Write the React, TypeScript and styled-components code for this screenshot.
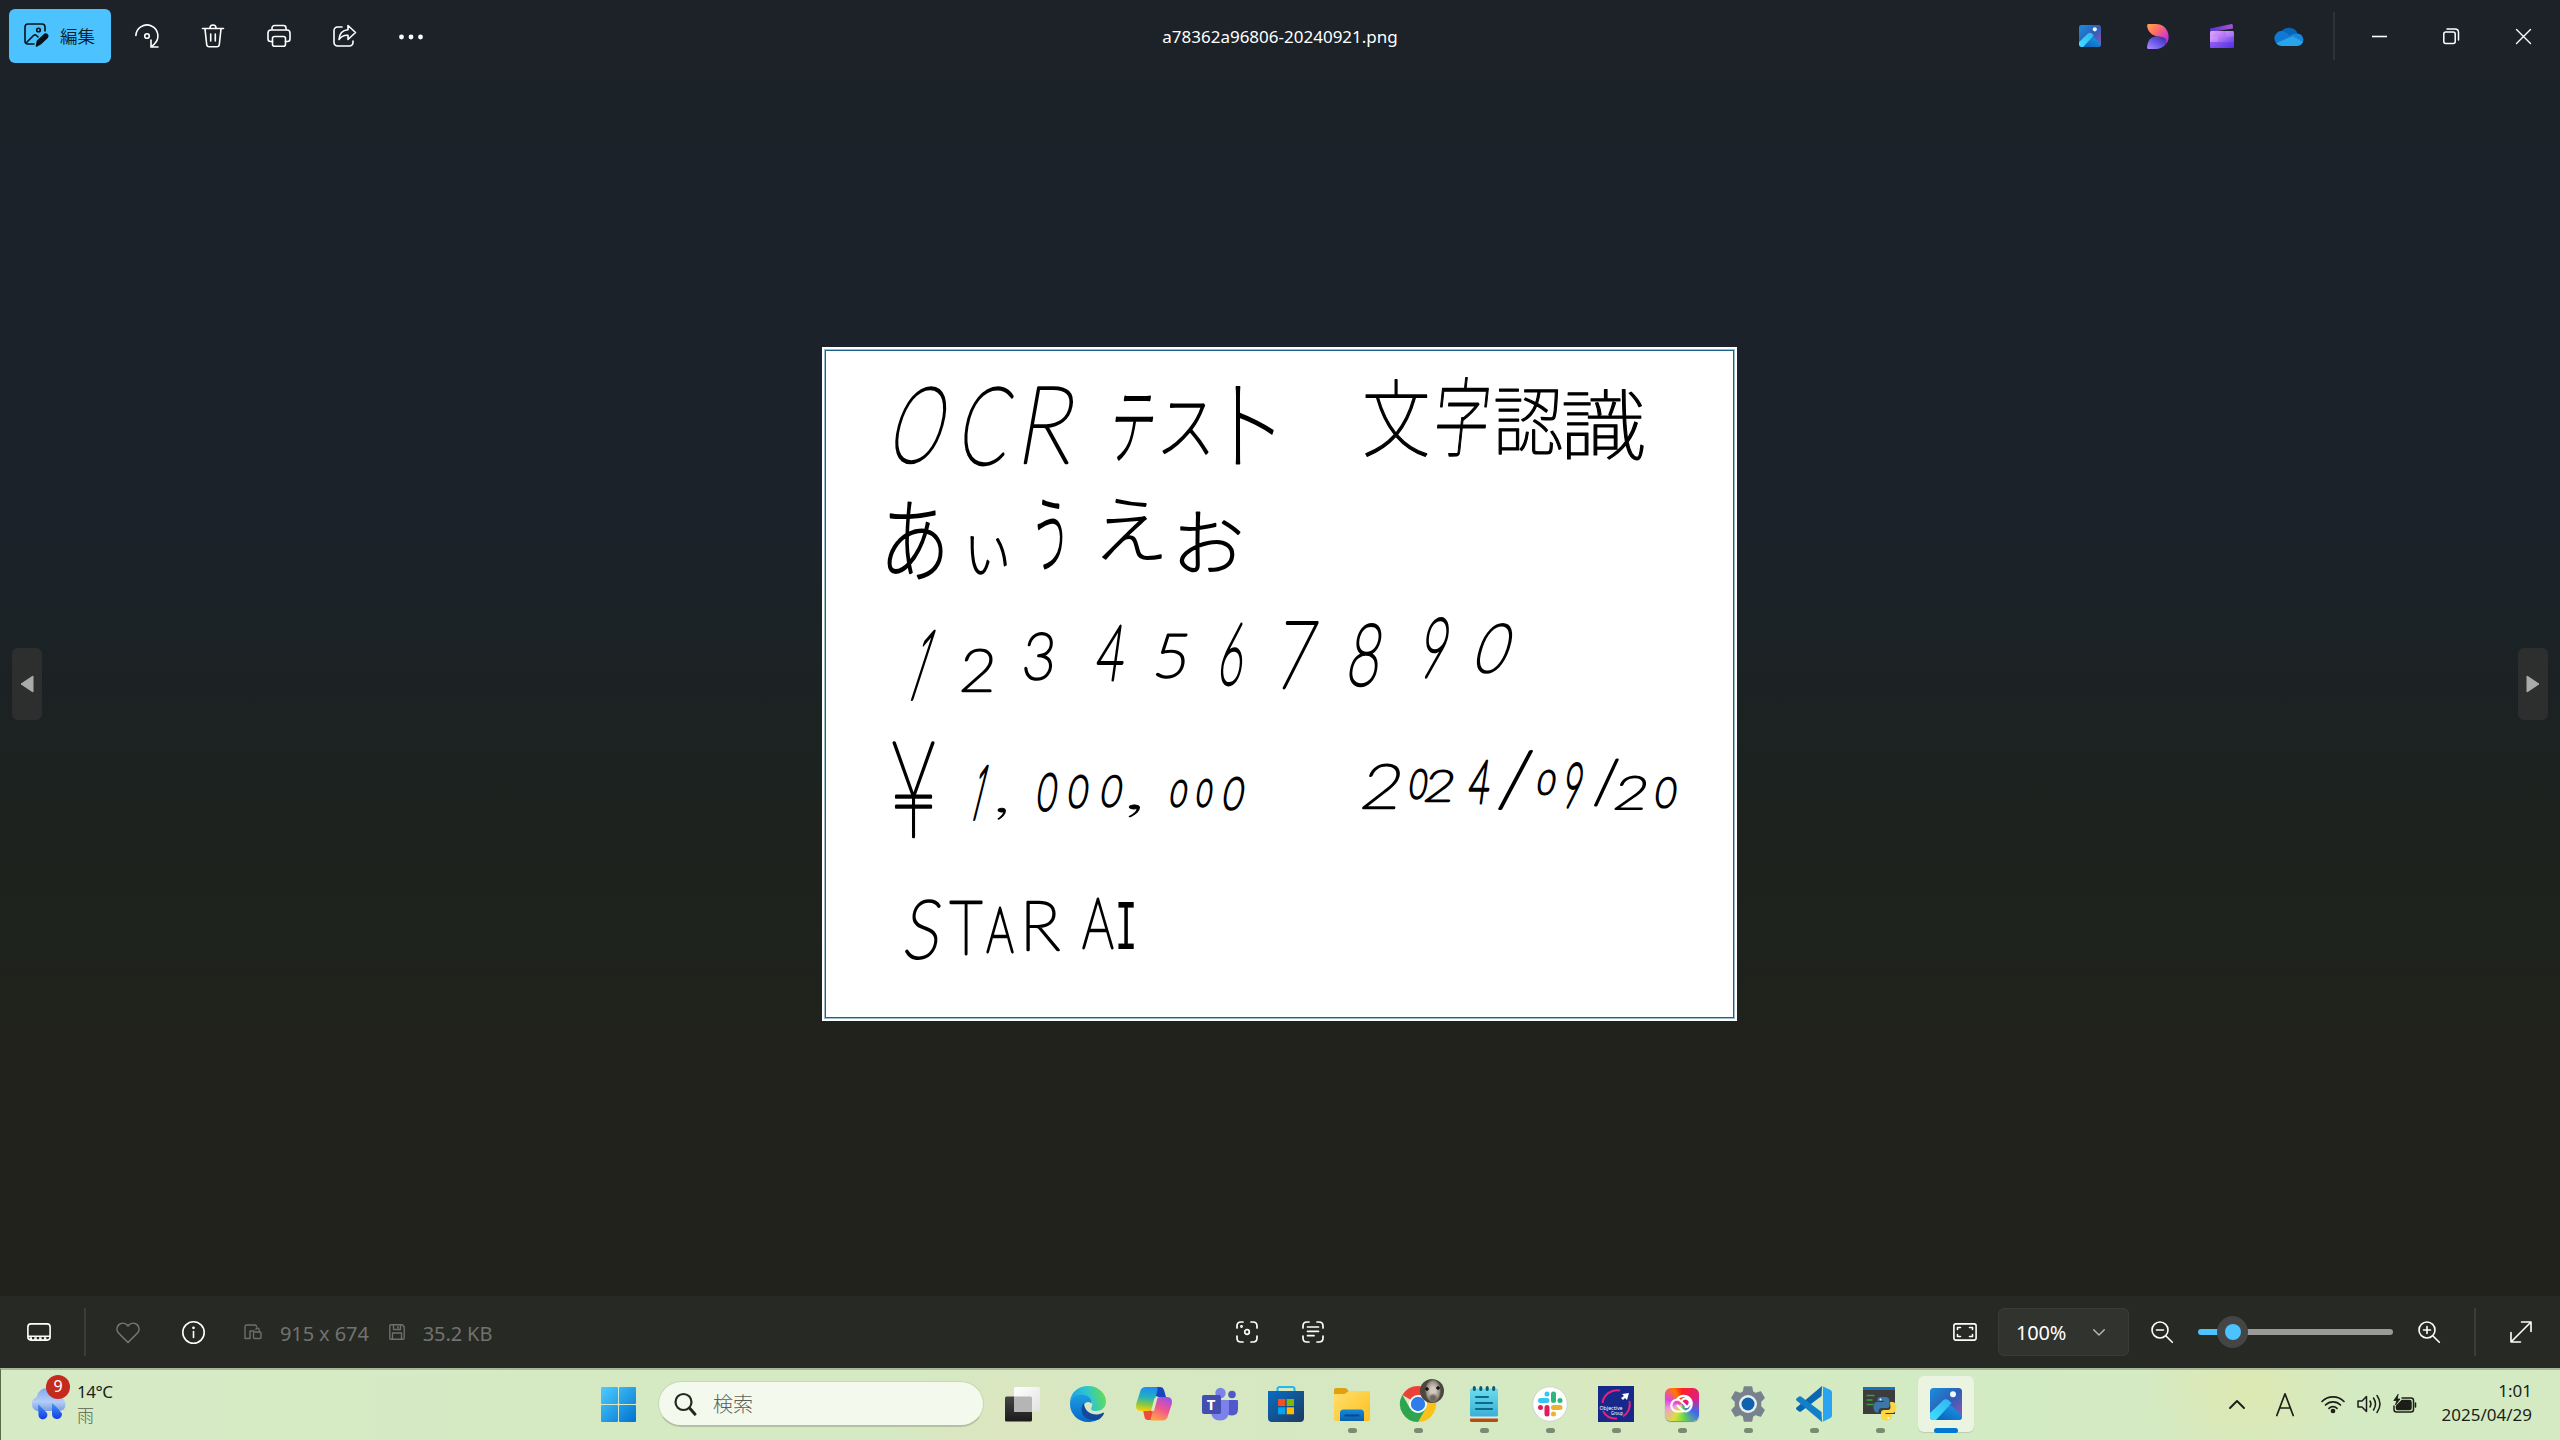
import React from 'react';
import styled, { createGlobalStyle } from 'styled-components';

const GlobalStyle = createGlobalStyle`
  * { box-sizing: border-box; }
  body { margin: 0; background: #1c2228; overflow: hidden; }
  svg { display: block; flex: none; overflow: visible; }
`;

const Screen = styled.div`
  width: 2560px;
  height: 1440px;
  display: flex;
  flex-direction: column;
  font-family: 'Noto Sans', 'Noto Sans CJK JP', sans-serif;
  color: #fff;
  background: linear-gradient(180deg, #1c2228 0%, #1b222a 22%, #1b2229 38%, #1d221f 56%, #20221b 72%, #20221b 100%);
`;

/* ---------- title bar ---------- */
const TitleBar = styled.header`
  height: 72px;
  display: grid;
  grid-template-columns: 1fr auto 1fr;
  align-items: center;
`;
const Tools = styled.div`
  display: flex;
  align-items: center;
  padding-left: 9px;
`;
const EditButton = styled.button`
  width: 102px;
  height: 54px;
  margin-right: 3px;
  border: 0;
  border-radius: 6px;
  background: #4cc2ff;
  color: #06202e;
  display: flex;
  align-items: center;
  gap: 12px;
  padding: 0 0 2px 15px;
  font: 350 17.5px 'Noto Sans CJK JP', sans-serif;
`;
const ToolSlot = styled.div<{ $w?: number }>`
  width: ${(p) => p.$w ?? 66}px;
  height: 48px;
  display: flex;
  align-items: center;
  justify-content: center;
`;
const FileName = styled.div`
  font-size: 17px;
  line-height: 24px;
  padding-top: 1px;
  color: #fff;
`;
const WindowTools = styled.div`
  display: flex;
  align-items: center;
  justify-content: flex-end;
`;
const Divider = styled.div<{ $c?: string }>`
  width: 2px;
  height: 48px;
  flex: none;
  background: ${(p) => p.$c ?? '#2d3238'};
`;

/* ---------- viewer ---------- */
const Viewer = styled.main`
  flex: 1;
  display: flex;
  align-items: center;
  justify-content: space-between;
  padding: 0 12px;
`;
const NavButton = styled.button`
  width: 30px;
  height: 72px;
  border: 0;
  padding: 0;
  border-radius: 6px;
  background: #2c2f2d;
  display: flex;
  align-items: center;
  justify-content: center;
`;
const Photo = styled.div`
  width: 915px;
  height: 674px;
  margin-right: 1px;
  background: #fff;
  border: 2px solid #fff;
  box-shadow: inset 0 0 0 1px #9dbccb, inset 0 0 0 2px #1d6488;
`;

/* ---------- info bar ---------- */
const InfoBar = styled.footer`
  height: 72px;
  flex: none;
  display: grid;
  grid-template-columns: 1fr auto 1fr;
  align-items: center;
  background: #272924;
`;
const Group = styled.div<{ $end?: boolean }>`
  display: flex;
  align-items: center;
  justify-content: ${(p) => (p.$end ? 'flex-end' : 'flex-start')};
`;
const Meta = styled.span<{ $l: number; $r: number }>`
  font-size: 20px;
  line-height: 28px;
  padding-top: 3px;
  color: #72736f;
  white-space: nowrap;
  letter-spacing: -0.1px;
  margin: 0 ${(p) => p.$r}px 0 ${(p) => p.$l}px;
`;
const ZoomBox = styled.div`
  width: 131px;
  height: 48px;
  border: 1px solid #3a3c38;
  border-radius: 6px;
  background: #31332f;
  display: flex;
  align-items: center;
  justify-content: space-between;
  padding: 0 23px 0 17px;
  font-size: 20px;
  letter-spacing: -0.2px;
`;
const Track = styled.div`
  width: 195px;
  height: 6px;
  border-radius: 3px;
  background: linear-gradient(90deg, #4cc2ff 34px, #9a9a98 34px);
  display: flex;
  align-items: center;
  padding-left: 19px;
`;
const Thumb = styled.div`
  width: 31px;
  height: 32px;
  flex: none;
  border-radius: 50%;
  background: #454545;
  display: flex;
  align-items: center;
  justify-content: center;
  &::after {
    content: '';
    width: 16px;
    height: 16px;
    border-radius: 50%;
    background: #4cc2ff;
  }
`;
const Gap = styled.div<{ $w: number }>`
  width: ${(p) => p.$w}px;
  flex: none;
`;

/* ---------- taskbar ---------- */
const Taskbar = styled.nav`
  height: 72px;
  flex: none;
  border-top: 2px solid #a9b79a;
  border-left: 1px solid #5b6b4a;
  display: flex;
  align-items: center;
  padding-bottom: 2px;
  color: #1b1f18;
  background:
    radial-gradient(ellipse 110px 90px at 2245px 20px, #dee8b2 0%, transparent 100%),
    radial-gradient(ellipse 120px 70px at 1010px 50px, #dde5bf 0%, transparent 100%),
    radial-gradient(ellipse 130px 90px at 1640px 10px, #dbe8bd 0%, transparent 100%),
    linear-gradient(90deg, #d7eac6 0%, #d5eac3 25%, #d6e8c2 50%, #d3ebc4 75%, #d5eac3 100%);
`;
const Weather = styled.div`
  width: 600px;
  display: flex;
  align-items: center;
  padding-left: 28px;
`;
const WeatherIcon = styled.div`
  position: relative;
  width: 37px;
  height: 34px;
`;
const Badge = styled.span`
  position: absolute;
  left: 17px;
  top: -12px;
  width: 24px;
  height: 24px;
  border-radius: 50%;
  background: #c42b1c;
  color: #fff;
  font-size: 16px;
  line-height: 23px;
  text-align: center;
`;
const TwoLines = styled.div<{ $right?: boolean }>`
  font-size: 17px;
  line-height: 24px;
  padding-bottom: 2px;
  text-align: ${(p) => (p.$right ? 'right' : 'left')};
  margin-left: ${(p) => (p.$right ? 25 : 11)}px;
  white-space: nowrap;
  letter-spacing: ${(p) => (p.$right ? 0 : -0.5)}px;
`;
const Sub = styled.div`
  margin-top: -1px;
  color: #565f4e;
  font-family: 'Noto Sans CJK JP', sans-serif;
  font-weight: 300;
`;
const Search = styled.div`
  width: 326px;
  height: 46px;
  margin: 0 5px 0 22px;
  border-radius: 23px;
  border: 1px solid #c7d7b4;
  border-bottom: 2px solid #b2c2a0;
  background: #f3f9ec;
  display: flex;
  align-items: center;
  gap: 17px;
  padding-left: 15px;
  font: 300 20px 'Noto Sans CJK JP', sans-serif;
  color: #5d6058;
`;
const Task = styled.div<{ $active?: boolean }>`
  position: relative;
  width: 56px;
  height: 56px;
  margin: 0 5px;
  border-radius: 6px;
  background: ${(p) => (p.$active ? '#ebf4e0' : 'transparent')};
  box-shadow: ${(p) => (p.$active ? '0 1px 1px #bccbad' : 'none')};
  display: flex;
  align-items: center;
  justify-content: center;
`;
const Running = styled.i<{ $active?: boolean }>`
  position: absolute;
  bottom: -1px;
  left: ${(p) => (p.$active ? 16 : 23.5)}px;
  width: ${(p) => (p.$active ? 24 : 9)}px;
  height: 5px;
  border-radius: 3px;
  background: ${(p) => (p.$active ? '#0078d4' : '#7b8a70')};
`;
const Avatar = styled.i`
  position: absolute;
  left: 30px;
  top: 3px;
  width: 24px;
  height: 24px;
  border-radius: 50%;
  background:
    radial-gradient(circle 2px at 7px 10px, #15120f 70%, transparent),
    radial-gradient(circle 2px at 18px 9px, #15120f 70%, transparent),
    radial-gradient(ellipse 5px 5px at 13px 19px, #6c665e 40%, transparent),
    radial-gradient(ellipse 8px 12px at 13px 12px, #d2cabe 30%, #978f82 80%, transparent),
    #4b463f;
`;
const Tray = styled.div`
  flex: 1;
  display: flex;
  align-items: center;
  justify-content: flex-end;
  padding-right: 28px;
`;

/* ---------- handwriting: every character fills its own box on the canvas ---------- */
type Mark = [string, number, number, number, number, number?, string?];
const ONE = 'Inter';
const MARKS: Mark[][] = [
  [
    ['O', 71, 39, 126, 117, 15], ['C', 140, 39, 191, 119, 10], ['R', 205, 39, 256, 117, 10],
    ['テ', 290, 48, 332, 114, 8], ['ス', 341, 55, 389, 108, 4], ['ト', 413, 39, 452, 118],
  ],
  [
    ['文', 543, 31, 606, 110], ['字', 614, 30, 667, 110, 6], ['認', 673, 42, 740, 108], ['識', 741, 43, 822, 115],
  ],
  [
    ['あ', 65, 155, 121, 233], ['い', 148, 189, 185, 228], ['う', 215, 152, 241, 222],
    ['え', 280, 152, 340, 212], ['お', 357, 164, 419, 225],
  ],
  [
    ['1', 85, 283, 112, 353, 18, ONE], ['2', 140, 301, 172, 345, 4], ['3', 202, 285, 232, 334, 5],
    ['4', 274, 277, 305, 334, 8], ['5', 335, 286, 365, 332, 8], ['6', 399, 275, 424, 339, 8],
    ['7', 457, 274, 494, 343, 8], ['8', 528, 276, 560, 340, 10], ['9', 600, 270, 627, 331, 10],
    ['0', 654, 276, 691, 327, 18],
  ],
  [
    ['¥', 70, 393, 113, 491], ['1', 148, 418, 166, 473, 14, ONE], [',', 175, 461, 184, 474],
    ['0', 215, 426, 236, 465, 8], ['0', 246, 428, 267, 462, 8], ['0', 279, 428, 301, 461, 10],
    [',', 306, 457, 318, 471], ['0', 348, 433, 366, 461, 10], ['0', 374, 432, 391, 461, 8],
    ['0', 401, 430, 423, 464, 10],
  ],
  [
    ['2', 542, 416, 579, 462, 10], ['0', 587, 422, 606, 453, 8], ['2', 604, 422, 632, 455, 10],
    ['4', 646, 412, 670, 457, 8], ['/', 676, 402, 711, 463], ['0', 715, 423, 734, 449, 10],
    ['9', 742, 415, 761, 461, 8], ['/', 772, 412, 797, 460], ['2', 794, 428, 825, 463, 10],
    ['0', 833, 430, 855, 462, 8],
  ],
  [
    ['S', 84, 552, 119, 613, 8], ['T', 127, 554, 161, 608], ['A', 164, 560, 192, 606],
    ['R', 204, 554, 238, 604], ['A', 260, 550, 292, 602], ['I', 296, 556, 312, 602, 0, '"Liberation Mono"'],
  ],
];
const PEN_FONT = 'Lato, "Noto Sans CJK JP"';

/* Ink added round the hairline glyphs, by script, so that all strokes look drawn by one pen. */
const penFor = (ch: string, font: string) => {
  if (font.includes('Mono')) return 0.1;
  if (ch === ',') return 1.2;
  if (ch > '\u4e00') return 1.2;
  if (ch > '\u3000') return 1.9;
  return 2.5;
};

function fit(mark: Mark, ctx: CanvasRenderingContext2D) {
  const [ch, x0, y0, x1, y1, slant = 0, font = PEN_FONT] = mark;
  ctx.font = `100 100px ${font}`;
  const m = ctx.measureText(ch);
  const inkW = m.actualBoundingBoxRight + m.actualBoundingBoxLeft;
  const inkH = m.actualBoundingBoxAscent + m.actualBoundingBoxDescent;
  const pen = penFor(ch, font);
  const h = y1 - y0 - pen;
  const lean = h * Math.tan((slant * Math.PI) / 180) * (font === ONE ? 0.8 : 0.4);
  const w = Math.max(x1 - x0 - pen - lean, 4);
  const cx = (m.actualBoundingBoxRight - m.actualBoundingBoxLeft) / 2;
  const cy = (m.actualBoundingBoxDescent - m.actualBoundingBoxAscent) / 2;
  const sx = w / inkW;
  const sy = h / inkH;
  return {
    transform: `translate(${(x0 + x1) / 2} ${(y0 + y1) / 2}) skewX(${-slant}) scale(${sx} ${sy}) translate(${-cx} ${-cy})`,
    pen: pen / Math.sqrt(sx * sy),
  };
}

const Ink = styled.text<{ $font: string }>`
  font-family: ${(p) => p.$font}, sans-serif;
  font-size: 100px;
  font-weight: 100;
  fill: #000;
  stroke: #000;
  stroke-linejoin: round;
`;

function Handwriting() {
  const ctx = React.useMemo(() => document.createElement('canvas').getContext('2d')!, []);
  return (
    <svg width="915" height="674" viewBox="2 2 915 674">
      {MARKS.map((line, i) => (
        <g key={i}>
          {line.map((m, j) => {
            const f = fit(m, ctx);
            return (
              <Ink key={j} $font={m[6] ?? PEN_FONT} strokeWidth={f.pen} transform={f.transform}>{m[0]}</Ink>
            );
          })}
        </g>
      ))}
    </svg>
  );
}

/* ---------- line icons ---------- */
const Line = styled.svg.attrs({ fill: 'none', strokeLinecap: 'round', strokeLinejoin: 'round' })<{ $c?: string; $s?: number }>`
  stroke: ${(p) => p.$c ?? '#fff'};
  stroke-width: ${(p) => p.$s ?? 1.6};
`;
const box = (w: number, h = w) => ({ width: w, height: h, viewBox: `0 0 ${w} ${h}` });

const EditIcon = () => (
  <Line {...box(24)} $c="#06131a" $s={1.6}>
    <path d="M21 8V4a3 3 0 0 0-3-3H4a3 3 0 0 0-3 3v14a3 3 0 0 0 3 3h6M3 19l6.5-6.5q1.5-1.2 3 0l1.5 1.5" />
    <circle cx="14.5" cy="7" r="1.8" />
    <path d="M12.5 23l1-5 7-6.5q1.500-1 2.700.2t.1 2.700l-7 6.500z" fill="#06131a" />
  </Line>
);
const RotateIcon = () => (
  <Line {...box(24)}>
    <path d="M.9 11.500a11 11 0 1 1 18.500 8.500l-3 2.800M16 16v7h7" strokeLinejoin="miter" />
    <circle cx="12" cy="12" r="2.300" />
  </Line>
);
const TrashIcon = () => (
  <Line {...box(24)}>
    <path d="M1.500 4.500h21M9 4a3 3 0 0 1 6 0M4 5l1.700 15.500a2.500 2.500 0 0 0 2.500 2.300h7.600a2.500 2.500 0 0 0 2.500-2.300L20 5M9.700 10v7M14.300 10v7" />
  </Line>
);
const PrintIcon = () => (
  <Line {...box(24)}>
    <path d="M5 6V4a2.500 2.500 0 0 1 2.500-2.500h9A2.500 2.500 0 0 1 19 4v2M5.500 17.500H3.500a2.500 2.500 0 0 1-2.500-2.500V9a3 3 0 0 1 3-3h16a3 3 0 0 1 3 3v6a2.500 2.500 0 0 1-2.500 2.500h-2" />
    <rect x="5.500" y="12.500" width="13" height="9.700" rx="2" />
  </Line>
);
const ShareIcon = () => (
  <Line {...box(24)}>
    <path d="M9 3H4.500A3.500 3.500 0 0 0 1 6.500v12A3.500 3.500 0 0 0 4.500 22h12a3.500 3.500 0 0 0 3.500-3.500V17" />
    <path d="M15 1.500l7.500 7-7.500 7v-4.200c-4.500-.3-7 1.200-9 4.200.3-5.500 3-9.300 9-9.800z" />
  </Line>
);
const MoreIcon = () => (
  <svg {...box(24)} fill="#fff"><circle cx="2.500" cy="13" r="2.400" /><circle cx="12" cy="13" r="2.400" /><circle cx="21.500" cy="13" r="2.400" /></svg>
);

/* ---------- colour icons ---------- */
const PhotosIcon = ({ w, h, id }: { w: number; h: number; id: string }) => (
  <svg width={w} height={h} viewBox="0 0 32 32" preserveAspectRatio="none">
    <defs>
      <linearGradient id={id + 'a'} x1="0" y1="0" x2="1" y2="1"><stop stopColor="#1a8fe0" /><stop offset=".5" stopColor="#2d5fb4" /><stop offset="1" stopColor="#9c52b8" /></linearGradient>
      <linearGradient id={id + 'b'} x1="1" y1="0" x2="0" y2="1"><stop stopColor="#2fb4f0" /><stop offset="1" stopColor="#3fe0ff" /></linearGradient>
      <linearGradient id={id + 'c'} x1="0" y1="1" x2="1" y2="0"><stop stopColor="#0a5fb8" /><stop offset="1" stopColor="#1a9be8" /></linearGradient>
      <clipPath id={id + 'd'}><rect width="32" height="32" rx="3.500" /></clipPath>
    </defs>
    <g clipPath={`url(#${id}d)`}>
      <rect width="32" height="32" fill={`url(#${id}a)`} />
      <path d="M5 32l12-13q3-3 6 0l9 9v4z" fill={`url(#${id}c)`} />
      <path d="M0 25l13-12.500q3-2.700 6 0l2.500 2.700L6 32H2l-2-2z" fill={`url(#${id}b)`} />
    </g>
    <circle cx="23" cy="6.300" r="3" fill="#f2f6ff" />
  </svg>
);
const DesignerIcon = () => (
  <svg {...box(22, 25)}>
    <defs>
      <linearGradient id="dsA" x1="0" y1="0" x2="1" y2=".9"><stop stopColor="#ffa64a" /><stop offset=".4" stopColor="#ff6b6b" /><stop offset=".75" stopColor="#d43cc4" /><stop offset="1" stopColor="#8f32e8" /></linearGradient>
      <linearGradient id="dsB" x1="0" y1="1" x2="1" y2="0"><stop stopColor="#b68cff" /><stop offset=".5" stopColor="#6558e8" /><stop offset="1" stopColor="#3a2a9c" /></linearGradient>
    </defs>
    <path d="M0 1.500Q0 0 1.500 0H9a12.500 12.500 0 0 1 9 21.300q2.500-6-3-8.300C8 13 1 10 0 1.500z" fill="url(#dsA)" />
    <path d="M0 24C.5 16 4 12.500 10 12.500q7 .2 9 2.500a7 7 0 0 1-1 6.300Q14 25 9 25H1z" fill="url(#dsB)" />
  </svg>
);
const ClipchampIcon = () => (
  <svg {...box(24)}>
    <defs>
      <linearGradient id="cc1" x1="0" y1="0" x2="1" y2="1"><stop stopColor="#e6a8ff" /><stop offset=".5" stopColor="#a86cf4" /><stop offset="1" stopColor="#4a2ee8" /></linearGradient>
      <linearGradient id="cc2"><stop stopColor="#5536c8" /><stop offset="1" stopColor="#a653dc" /></linearGradient>
    </defs>
    <path d="M0 4.500L21.500 0q1-.1 1.200.9L23 4.500 1 8H0z" fill="url(#cc2)" />
    <rect y="7" width="24" height="17" rx="1.500" fill="url(#cc1)" />
    <path d="M0 12.500h16V7h8v5.500H8V18H0zM8 18h16" fill="#fff" opacity=".12" />
    <path d="M0 18h24v4.500a1.500 1.500 0 0 1-1.500 1.500h-21A1.500 1.500 0 0 1 0 22.500z" fill="#5b36ee" opacity=".45" />
  </svg>
);
const OneDriveIcon = () => (
  <svg {...box(30, 20)}>
    <path d="M7 6A9.500 9.500 0 0 1 23.500 7L17 12z" fill="#0a64b8" />
    <path d="M23 7.500a6.300 6.300 0 0 1 5.500 9.500L15 10.500Q19 7 23 7.500z" fill="#1785da" />
    <path d="M2 17A7.500 7.500 0 0 1 6.500 5Q10 4.500 12.500 7l7 4.500z" fill="#1178d4" />
    <path d="M2 17l16.500-7 10.500 6q-2 4-6 4H8q-4 0-6-3z" fill="#28a4ea" />
  </svg>
);

const WindowsIcon = () => (
  <svg {...box(35)}>
    <defs><linearGradient id="win" gradientUnits="userSpaceOnUse" x1="0" y1="0" x2="35" y2="35"><stop stopColor="#4ecdff" /><stop offset="1" stopColor="#0072d0" /></linearGradient></defs>
    <g fill="url(#win)"><rect width="17" height="17" rx="1" /><rect x="18" width="17" height="17" rx="1" /><rect y="18" width="17" height="17" rx="1" /><rect x="18" y="18" width="17" height="17" rx="1" /></g>
  </svg>
);
const TaskViewIcon = () => (
  <svg {...box(35)}>
    <defs>
      <linearGradient id="tv1" x2="0" y2="1"><stop stopColor="#444" /><stop offset="1" stopColor="#1b1b1b" /></linearGradient>
      <linearGradient id="tv2" x2="1" y2="1"><stop stopColor="#fff" /><stop offset="1" stopColor="#e2e2e2" /></linearGradient>
    </defs>
    <rect y="9.500" width="27" height="25" rx="1.500" fill="url(#tv1)" />
    <rect x="9" y="0" width="26" height="25" rx="1.500" fill="url(#tv2)" />
    <path d="M9 9.500h16.500a1.500 1.500 0 0 1 1.500 1.500v14H10.500A1.500 1.500 0 0 1 9 23.500z" fill="#b5b5b5" />
  </svg>
);
const EdgeIcon = () => (
  <svg {...box(36)}>
    <defs>
      <linearGradient id="eg1" x1="0" y1=".6" x2="1" y2=".4"><stop stopColor="#1b9fe0" /><stop offset=".5" stopColor="#2cc4d2" /><stop offset="1" stopColor="#62de52" /></linearGradient>
      <linearGradient id="eg2" x2="0" y2="1"><stop stopColor="#1b9de2" /><stop offset="1" stopColor="#0a66c8" /></linearGradient>
    </defs>
    <path d="M0 18C0 5 10 0 18 0c11 0 18 8 18 15.500C36 22 31 25 26 25c-4 0-5.500-1.500-4.500-3.500 2-4 0-8-6-10C8 9 2 13 0 18z" fill="url(#eg1)" />
    <path d="M0 18C.5 11 8 8 14 9c6 1 8 5 7.500 9-1-3-7-3-8 2C12 28 18 34 27 34c-3 1.500-6 2-9 2C8 36 0 28 0 18z" fill="url(#eg2)" />
    <path d="M14 17c-5 5-3 19 13.500 17 3-1 5.500-4 6.500-6.500.3-1-.5-1-1-.7-8 4.500-19 0-19-9.800z" fill="#114a9b" />
  </svg>
);
const CopilotIcon = () => (
  <svg {...box(36, 34)}>
    <defs>
      <linearGradient id="cp1" x1=".4" y1="0" x2=".3" y2="1"><stop stopColor="#1f8cf0" /><stop offset=".4" stopColor="#22b0c0" /><stop offset=".7" stopColor="#7fc84a" /><stop offset="1" stopColor="#ffd000" /></linearGradient>
      <linearGradient id="cp2" x1=".7" y1="0" x2=".3" y2="1"><stop stopColor="#a04ee8" /><stop offset=".5" stopColor="#f0568c" /><stop offset="1" stopColor="#ffa04a" /></linearGradient>
    </defs>
    <path d="M17 0h7q3 0 4 3l2 7h-7q-3 0-4-3z" fill="#1746c0" />
    <path d="M19 33h-7q-3 0-3.500-3L7 23h7q2.500 0 3.500 3z" fill="#f04a3a" />
    <path d="M10 0h10q2 0 1.500 3l-4.500 17q-1 4-5 4H5q-6 0-4.800-7L4 5q1-5 6-5z" fill="url(#cp1)" />
    <path d="M26 33.500H16q-2 0-1-3L19.500 14q1-4 5-4H31q6 0 4.800 7L32 28.500q-1 5-6 5z" fill="url(#cp2)" />
    <path d="M18.500 11h3l-3.500 13h-3z" fill="#d7e8c3" />
  </svg>
);
const LogoLetter = styled.text`
  font: 700 15px 'Noto Sans', sans-serif;
  fill: #fff;
`;
const TeamsIcon = () => (
  <svg {...box(36, 33)}>
    <circle cx="18.500" cy="5" r="5.200" fill="#7b83eb" /><circle cx="30" cy="6.500" r="3.800" fill="#5059c9" />
    <path d="M23 12h12a1 1 0 0 1 1 1v8q0 6.500-6 6.500-5 0-7-4z" fill="#5059c9" />
    <path d="M10 12h16a1 1 0 0 1 1 1v10q0 9.500-9 9.500t-9-9.500V13z" fill="#7b83eb" />
    <rect y="7" width="19" height="19" rx="2" fill="#444db0" />
    <LogoLetter x="4.800" y="21.800">T</LogoLetter>
  </svg>
);
const StoreIcon = () => (
  <svg {...box(36)}>
    <defs><linearGradient id="st" x1="0" y1="0" x2="1" y2="1"><stop stopColor="#0a6cc4" /><stop offset="1" stopColor="#1c3a60" /></linearGradient></defs>
    <path d="M9.500 7V3a2 2 0 0 1 2-2h13a2 2 0 0 1 2 2v4" fill="none" stroke="#22b8f0" strokeWidth="2.200" />
    <path d="M0 5h36v27q0 4-4 4H4q-4 0-4-4z" fill="url(#st)" />
    <path fill="#f25022" d="M10 13h7.300v7H10z" /><path fill="#7fba00" d="M18.700 13H26v7h-7.300z" /><path fill="#00a4ef" d="M10 21.300h7.300v7H10z" /><path fill="#ffb900" d="M18.700 21.300H26v7h-7.300z" />
  </svg>
);
const ExplorerIcon = () => (
  <svg {...box(36, 33)}>
    <defs>
      <linearGradient id="ex" x1="0" y1="0" x2="1" y2="1"><stop stopColor="#ffdf6e" /><stop offset="1" stopColor="#fcbf1e" /></linearGradient>
      <linearGradient id="ex2" x2="0" y2="1"><stop stopColor="#1489dc" /><stop offset="1" stopColor="#0a5fae" /></linearGradient>
    </defs>
    <path d="M0 2q0-2 2-2h9q1.500 0 2.500 1.500L15 4l-5 6H0z" fill="#e0a010" />
    <path d="M0 6h9q2 0 3.500-1.300T16 3h18q2 0 2 2v26q0 2-2 2H2q-2 0-2-2z" fill="url(#ex)" />
    <path d="M6 33v-8q0-3.500 3.500-3.500h17q3.500 0 3.500 3.500v8z" fill="url(#ex2)" />
    <path d="M11.500 27.500h13" stroke="#0a4a8c" strokeWidth="2" strokeLinecap="round" />
  </svg>
);
const ChromeIcon = () => (
  <svg {...box(36)}>
    <path d="M18 18L2.400 9A18 18 0 0 1 33.600 9z" fill="#ea4335" />
    <path d="M18 9h15.600A18 18 0 0 1 18 36l7.800-13.500z" fill="#fbc116" />
    <path d="M25.800 22.500L18 36A18 18 0 0 1 2.400 9l7.800 13.500z" fill="#2da44e" />
    <circle cx="18" cy="18" r="9" fill="#fff" /><circle cx="18" cy="18" r="7.200" fill="#2f7de9" />
  </svg>
);
const NotepadIcon = () => (
  <svg {...box(28, 36)}>
    <defs><linearGradient id="np" x2="0" y2="1"><stop stopColor="#6cdcee" /><stop offset="1" stopColor="#38b0d8" /></linearGradient></defs>
    <rect y="31" width="28" height="5" rx="1.500" fill="#b4500f" /><rect y="29" width="28" height="3.500" fill="#e6e6e6" />
    <rect y="2.500" width="28" height="28" rx="1.500" fill="url(#np)" />
    <path d="M4.300 1.500v2M10.800 1.500v2M17.200 1.500v2M23.700 1.500v2" stroke="#0e5870" strokeWidth="3" strokeLinecap="round" />
    <path d="M6 11h12M6 17h16M6 23h16" stroke="#0c6a86" strokeWidth="2.200" strokeLinecap="round" />
  </svg>
);
const SlackIcon = () => (
  <svg {...box(36)}>
    <circle cx="18" cy="18" r="17.300" fill="#fff" stroke="#cfd6c8" />
    <g strokeWidth="5" strokeLinecap="round">
      <path d="M15 14.500H8.500M15 8v.01" stroke="#36c5f0" /><path d="M21.500 8v6.500M28 14.500v.01" stroke="#2eb67d" />
      <path d="M21.500 21.500H28M21.500 28v.01" stroke="#ecb22e" /><path d="M15 21.500V28M8.500 21.500v.01" stroke="#e01e5a" />
    </g>
  </svg>
);
const TinyLabel = styled.text<{ $s: number }>`
  font: 400 ${(p) => p.$s}px 'Noto Sans', sans-serif;
  fill: #fff;
`;
const ObjectiveIcon = () => (
  <svg {...box(36)}>
    <rect width="36" height="36" fill="#16298a" />
    <path d="M22 4.500A14.500 14.500 0 0 0 4.500 17M5 25a14.500 14.500 0 0 0 14 7.500M25 30.500A14.500 14.500 0 0 0 31.500 15" fill="none" stroke="#e8207c" strokeWidth="2" />
    <path d="M31 7l-2 7-2-2-2 2-2-2 3-2-2-2z" fill="#fff" />
    <TinyLabel $s={6} x="1.500" y="23.500" textLength="23" lengthAdjust="spacingAndGlyphs">Objective</TinyLabel>
    <TinyLabel $s={5} x="13" y="28.500" textLength="12" lengthAdjust="spacingAndGlyphs">Group</TinyLabel>
  </svg>
);
const Rainbow = styled.div`
  width: 34px;
  height: 33px;
  border-radius: 6px;
  background: conic-gradient(from 0deg, #ff2020, #e01e80 18%, #3a6cf0 34%, #6cd84a 48%, #d8e03a 58%, #f0a0d0 70%, #e040e8 80%, #ff7a00 92%, #ff2020);
  box-shadow: 0 1px 1px #8a8a80;
  display: flex;
  align-items: center;
  justify-content: center;
`;
const CreativeCloudIcon = () => (
  <Rainbow>
    <svg {...box(26, 22)} fill="none" stroke="#fff" strokeWidth="2.200" strokeLinecap="round">
      <path d="M13.500 18.500H8.500a6 6 0 0 1-.5-12q2.300 0 3.800 1.500l4.700 4.500M8 6.500A8 8 0 1 1 17 18.500q-2.300 0-3.800-1.500L8.500 12.500M12.800 7.500a4.300 4.300 0 1 1 3.700 6.500" />
    </svg>
  </Rainbow>
);
const SettingsIcon = () => (
  <svg {...box(36)}>
    <path d="M14.500 1h7l1 5 3 1.700 5-1.700 3.500 6-3.500 3.500v5L34 24l-3.500 6-5-1.700-3 1.700-1 5h-7l-1-5-3-1.700-5 1.700L2 24l3.500-3.500v-5L2 12l3.500-6 5 1.700 3-1.700z" fill="#78828c" stroke="#78828c" strokeWidth="1.500" strokeLinejoin="round" />
    <circle cx="18" cy="18" r="9" fill="#e8edf0" /><circle cx="18" cy="18" r="6.500" fill="#0f62b0" />
  </svg>
);
const VSCodeIcon = () => (
  <svg {...box(36)}>
    <path d="M26 0l-.5 10L5 25.500q-1 .6-2 0L.5 23.500q-1-1 0-2z" fill="#0a66b0" />
    <path d="M26 36l-.5-10L5 10.500q-1-.6-2 0L.5 12.500q-1 1 0 2z" fill="#1180c8" />
    <path d="M26 0l8.500 4Q36 4.700 36 6.500v23q0 1.800-1.500 2.500L26 36q1-.5 1-2V2q0-1.500-1-2z" fill="#28a4f0" />
  </svg>
);
const PythonIcon = () => (
  <svg {...box(34, 34)}>
    <rect width="32" height="27" fill="#3c3c3c" /><rect width="32" height="3" fill="#1870b8" />
    <path d="M3.500 8.500h8M3.500 13h6M3.500 17.500h7" stroke="#3f9c3a" strokeWidth="1.500" />
    <path d="M17 10h6q3.500.5 3.500 4v4.500q0 2.500-2.500 2.500h-5q-3.500 0-3.500 3v1.500h-2q-3-1-3-5.500t3-5H21v-1h-6.500V12q0-1.500 2.500-2z" fill="#3b77a8" />
    <path d="M27 15h3q3.500 1 3.500 5.500T30 26h-7.500v1H29v3.500q-1 3-5.500 3T18 30.500V26q0-3 3-3h4q2.500 0 2.500-3z" fill="#fdd843" />
    <circle cx="17.500" cy="12.500" r="1" fill="#fff" /><circle cx="25.500" cy="31" r="1" fill="#fff" />
  </svg>
);
const RainIcon = () => (
  <svg {...box(37, 34)}>
    <defs>
      <linearGradient id="rn" x2="0" y2="1"><stop stopColor="#7ea8ee" /><stop offset=".6" stopColor="#b4cdf8" /><stop offset="1" stopColor="#7a9ee0" /></linearGradient>
      <linearGradient id="dr" x2="0" y2="1"><stop stopColor="#3c9cf0" /><stop offset="1" stopColor="#1838e8" /></linearGradient>
    </defs>
    <path d="M8 24A7.500 7.500 0 0 1 7.500 10Q10 1 18.500 1t11.500 9q6.500 1.500 6.500 7.500T30 24z" fill="url(#rn)" />
    <path d="M9 17q5 5 9 9a4.500 4.500 0 1 1-8.500 1zM23 16q6 5 10 10.500a5 5 0 1 1-10 1z" fill="url(#dr)" />
  </svg>
);

const TASKS: { icon: React.ReactNode; run?: boolean; active?: boolean; avatar?: boolean }[] = [
  { icon: <TaskViewIcon /> },
  { icon: <EdgeIcon /> },
  { icon: <CopilotIcon /> },
  { icon: <TeamsIcon /> },
  { icon: <StoreIcon /> },
  { icon: <ExplorerIcon />, run: true },
  { icon: <ChromeIcon />, run: true, avatar: true },
  { icon: <NotepadIcon />, run: true },
  { icon: <SlackIcon />, run: true },
  { icon: <ObjectiveIcon />, run: true },
  { icon: <CreativeCloudIcon />, run: true },
  { icon: <SettingsIcon />, run: true },
  { icon: <VSCodeIcon />, run: true },
  { icon: <PythonIcon />, run: true },
  { icon: <PhotosIcon w={32} h={32} id="pt" />, run: true, active: true },
];

export default function App() {
  return (
    <>
      <GlobalStyle />
      <Screen>
        <TitleBar>
          <Tools>
            <EditButton><EditIcon />編集</EditButton>
            <ToolSlot><RotateIcon /></ToolSlot>
            <ToolSlot><TrashIcon /></ToolSlot>
            <ToolSlot><PrintIcon /></ToolSlot>
            <ToolSlot><ShareIcon /></ToolSlot>
            <ToolSlot><MoreIcon /></ToolSlot>
          </Tools>
          <FileName>a78362a96806-20240921.png</FileName>
          <WindowTools>
            <ToolSlot $w={68}><PhotosIcon w={22} h={22} id="ph" /></ToolSlot>
            <ToolSlot $w={68}><DesignerIcon /></ToolSlot>
            <ToolSlot $w={60}><ClipchampIcon /></ToolSlot>
            <ToolSlot $w={74}><OneDriveIcon /></ToolSlot>
            <Gap $w={7} />
            <Divider />
            <Gap $w={8} />
            <ToolSlot $w={72}><Line {...box(15)}><path d="M0 7.500h15" strokeLinecap="butt" /></Line></ToolSlot>
            <ToolSlot $w={72}><Line {...box(16)} $s={1.5}><rect x=".8" y="4" width="11.400" height="11.400" rx="2" /><path d="M4 1h8q3.500 0 3.500 3.500V12" /></Line></ToolSlot>
            <ToolSlot $w={72}><Line {...box(15)} $s={1.4}><path d="M.5.5l14 14M14.500.5l-14 14" /></Line></ToolSlot>
            <Gap $w={1} />
          </WindowTools>
        </TitleBar>

        <Viewer>
          <NavButton><svg {...box(14, 20)}><path d="M13 2v16L1 10z" fill="#a9aaa9" stroke="#a9aaa9" strokeLinejoin="round" /></svg></NavButton>
          <Photo><Handwriting /></Photo>
          <NavButton><svg {...box(14, 20)}><path d="M1 2v16l12-8z" fill="#a9aaa9" stroke="#a9aaa9" strokeLinejoin="round" /></svg></NavButton>
        </Viewer>

        <InfoBar>
          <Group>
            <Gap $w={27} />
            <Line {...box(24, 18)}><rect x=".9" y=".9" width="22.200" height="16.200" rx="3" /><path d="M1.500 13.300h21" /><path d="M2.500 15.500h19" strokeDasharray="2.500 2.300" strokeLinecap="butt" strokeWidth="2.500" /></Line>
            <Gap $w={33} />
            <Divider $c="#3b3d38" />
            <Gap $w={30} />
            <Line {...box(24, 22)} $c="#767773"><path d="M12 21.500L2.300 11.800a5.900 5.900 0 0 1 8.300-8.300L12 4.900l1.400-1.400a5.900 5.900 0 0 1 8.300 8.300z" /></Line>
            <Gap $w={42} />
            <Line {...box(23)}><circle cx="11.500" cy="11.500" r="10.700" /><path d="M11.500 10.500v6" /><circle cx="11.500" cy="6.800" r=".6" fill="#fff" /></Line>
            <Gap $w={39} />
            <Line {...box(18, 16)} $c="#6e6f6b" $s={1.4}><path d="M5 14.500H1V2.500Q1 1 2.500 1h8.500q1.500 0 1.500 1.500M6 14.500V7h4M12 5.500q0-1.500 1.500-1.500t1.700 2V8" /><rect x="9.500" y="8" width="7.500" height="6.500" rx="1" /></Line>
            <Meta $l={18} $r={20}>915 x 674</Meta>
            <Line {...box(16)} $c="#6e6f6b" $s={1.4}><path d="M.8 2Q.8.800 2 .800h11.500L15.200 3v11q0 1.200-1.200 1.200H2Q.8 15.200.800 14zM4.500 1v4.500h7V1M9 2.500v1.500M3.500 15V9h9v6" /></Line>
            <Meta $l={18} $r={0}>35.2 KB</Meta>
          </Group>
          <Group>
            <ToolSlot><Line {...box(22)} $s={1.7}><path d="M1 7V5q0-4 4-4h2M15 1h2q4 0 4 4v2M21 15v2q0 4-4 4h-2M7 21H5q-4 0-4-4v-2" /><circle cx="11" cy="11" r="2.300" /><circle cx="5.500" cy="5.500" r=".6" /></Line></ToolSlot>
            <ToolSlot><Line {...box(22)} $s={1.7}><path d="M1 7V5q0-4 4-4h2M15 1h2q4 0 4 4v2M21 15v2q0 4-4 4h-2M7 21H5q-4 0-4-4v-2M5.500 6h11M5.500 10.300h11M5.500 14.700h6.500" /></Line></ToolSlot>
          </Group>
          <Group $end>
            <Line {...box(24, 18)} $s={1.6}><rect x=".9" y=".9" width="22.200" height="16.200" rx="2" /><path d="M4.500 6.500V4.500h3M16.500 4.500h3v2M19.500 11.500v2h-3M7.500 13.500h-3v-2" /></Line>
            <Gap $w={21} />
            <ZoomBox>100%<Line {...box(12, 7)} $c="#b9bab7" $s={1.4}><path d="M.7.700L6 6 11.300.700" /></Line></ZoomBox>
            <Gap $w={22} />
            <Line {...box(22)}><circle cx="9" cy="9" r="8" /><path d="M15 15l6.300 6.300M5.500 9h7" /></Line>
            <Gap $w={25} />
            <Track><Thumb /></Track>
            <Gap $w={25} />
            <Line {...box(22)}><circle cx="9" cy="9" r="8" /><path d="M15 15l6.300 6.300M5.500 9h7M9 5.500v7" /></Line>
            <Gap $w={34} />
            <Divider $c="#3b3d38" />
            <Gap $w={34} />
            <Line {...box(22)}><path d="M1 21L21 1M11.500 1H21v9.500M1 11.500V21h9.500" /></Line>
            <Gap $w={28} />
          </Group>
        </InfoBar>

        <Taskbar>
          <Weather>
            <WeatherIcon><RainIcon /><Badge>9</Badge></WeatherIcon>
            <TwoLines>14°C<Sub>雨</Sub></TwoLines>
          </Weather>
          <WindowsIcon />
          <Search>
            <Line {...box(22)} $c="#24271f" $s={2.2}><circle cx="9.500" cy="9" r="8" /><path d="M15.500 15l5.500 6.200" strokeWidth="3" /></Line>
            検索
          </Search>
          {TASKS.map((t, i) => (
            <Task key={i} $active={t.active}>
              {t.icon}
              {t.avatar && <Avatar />}
              {t.run && <Running $active={t.active} />}
            </Task>
          ))}
          <Tray>
            <Line {...box(16, 9)} $c="#1b1f18" $s={1.9}><path d="M1 8l7-7 7 7" /></Line>
            <Gap $w={31} />
            <Line {...box(18, 23)} $c="#1b1f18" $s={1.7}><path d="M.8 22.500L9 .8l8.200 21.700M3.600 15h10.800" /></Line>
            <Gap $w={27} />
            <Line {...box(24, 18)} $c="#1b1f18" $s={1.7}><path d="M1 6.500a15.500 15.500 0 0 1 22 0M4.500 10a10.500 10.500 0 0 1 15 0M8 13.300a5.700 5.700 0 0 1 8 0" /><circle cx="12" cy="16" r="1.500" fill="#1b1f18" /></Line>
            <Gap $w={12} />
            <Line {...box(24, 20)} $c="#1b1f18" $s={1.5}><path d="M1 7h4l4.500-4.500v15L5 13H1zM13 7q2 3 0 6M16.500 4q4 6 0 12M20 1.500q6 8.500 0 17" /></Line>
            <Gap $w={12} />
            <Line {...box(24, 20)} $c="#1b1f18" $s={1.5}><path d="M9 4h9q2.500 0 2.500 2.500v9Q20.500 18 18 18H3.500Q1 18 1 15.500V12M22.500 9v4" /><path d="M9 6.500h7.500q1.500 0 1.500 1.500v6q0 1.500-1.500 1.500H4.500Q3.500 15.500 3.500 14v-2z" fill="#1b1f18" /><path d="M5 .5L.8 6.500h3L2.500 11 7 5H4.500z" fill="#1b1f18" strokeWidth=".8" /></Line>
            <TwoLines $right>1:01<div>2025/04/29</div></TwoLines>
          </Tray>
        </Taskbar>
      </Screen>
    </>
  );
}
